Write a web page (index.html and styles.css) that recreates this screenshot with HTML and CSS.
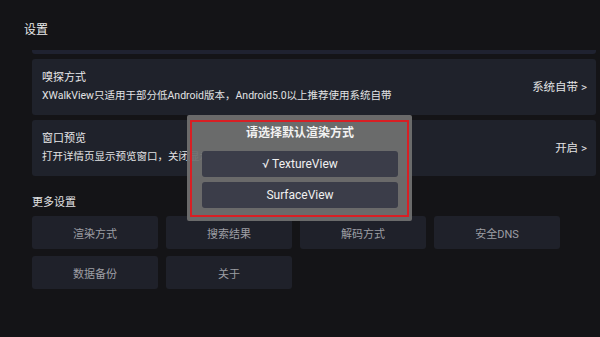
FILE: index.html
```html
<!DOCTYPE html>
<html lang="zh">
<head>
<meta charset="utf-8">
<link rel="stylesheet" href="styles.css">
</head>
<body>
<div class="page">
  <div class="title">设置</div>
  <div class="list">
    <div class="card-tail"></div>
    <div class="card">
      <div class="card-text">
        <div class="card-title">嗅探方式</div>
        <div class="card-sub">XWalkView只适用于部分低Android版本，Android5.0以上推荐使用系统自带</div>
      </div>
      <div class="card-value">系统自带 &gt;</div>
    </div>
    <div class="card">
      <div class="card-text">
        <div class="card-title">窗口预览</div>
        <div class="card-sub">打开详情页显示预览窗口，关闭显示缩略图</div>
      </div>
      <div class="card-value">开启 &gt;</div>
    </div>
  </div>
  <div class="section">更多设置</div>
  <div class="grid">
    <div class="gbtn">渲染方式</div>
    <div class="gbtn">搜索结果</div>
    <div class="gbtn">解码方式</div>
    <div class="gbtn">安全DNS</div>
    <div class="gbtn">数据备份</div>
    <div class="gbtn">关于</div>
  </div>
  <div class="dialog">
    <div class="dialog-inner">
      <div class="dialog-title">请选择默认渲染方式</div>
      <div class="dbtn">√ TextureView</div>
      <div class="dbtn">SurfaceView</div>
    </div>
  </div>
</div>
</body>
</html>
```

FILE: styles.css
```css
html, body {
  margin: 0;
  padding: 0;
  background: #141417;
}
body {
  font-family: "Roboto", "Noto Sans CJK SC", sans-serif;
  color: #e6e6e8;
}
.page {
  position: relative;
  width: 600px;
  height: 337px;
  overflow: hidden;
}
.title {
  font-size: 12px;
  line-height: 16px;
  padding: 22px 0 0 24px;
  height: 12px;
  color: #eaeaea;
}
.list {
  display: flex;
  flex-direction: column;
  gap: 5px;
  padding: 0 4px 0 32px;
  margin-top: 16px;
}
.card-tail {
  height: 4px;
  background: #1f2230;
  border-radius: 0 0 3px 3px;
}
.card {
  display: flex;
  align-items: center;
  justify-content: space-between;
  background: #1f222b;
  border-radius: 3px;
  height: 56px;
  padding: 0 9px 0 10px;
  box-sizing: border-box;
}
.card-title {
  font-size: 11px;
  line-height: 14px;
  color: #e8e8ea;
}
.card-sub {
  font-size: 10.5px;
  line-height: 14px;
  margin-top: 4px;
  color: #e2e2e4;
}
.card-value {
  font-size: 11.5px;
  line-height: 14px;
  color: #e2e2e4;
}
.section {
  font-size: 11px;
  line-height: 14px;
  padding-left: 32px;
  margin-top: 20px;
  color: #e2e2e4;
}
.grid {
  display: grid;
  grid-template-columns: repeat(4, 126px);
  grid-auto-rows: 33px;
  column-gap: 8px;
  row-gap: 7px;
  padding-left: 32px;
  margin-top: 6px;
}
.gbtn {
  background: #1f212a;
  border-radius: 3px;
  display: flex;
  align-items: center;
  justify-content: center;
  font-size: 11px;
  color: #9d9ea4;
}
.dialog {
  position: absolute;
  left: 187px;
  top: 115px;
  width: 225px;
  height: 106px;
  background: rgba(112, 112, 112, 0.94);
  border-radius: 2px;
  padding: 5px 3px 4px 3px;
  box-sizing: border-box;
}
.dialog-inner {
  border: 2px solid #d81f24;
  height: 100%;
  box-sizing: border-box;
  padding: 3px 9px 0 10px;
}
.dialog-title {
  font-size: 12px;
  line-height: 16px;
  font-weight: bold;
  text-align: center;
  color: #f2f2f2;
}
.dbtn {
  height: 26px;
  margin-top: 10px;
  background: #3b3d49;
  border-radius: 3px;
  display: flex;
  align-items: center;
  justify-content: center;
  font-size: 12px;
  color: #f0f0f0;
}
.dbtn + .dbtn {
  margin-top: 5px;
}
```
